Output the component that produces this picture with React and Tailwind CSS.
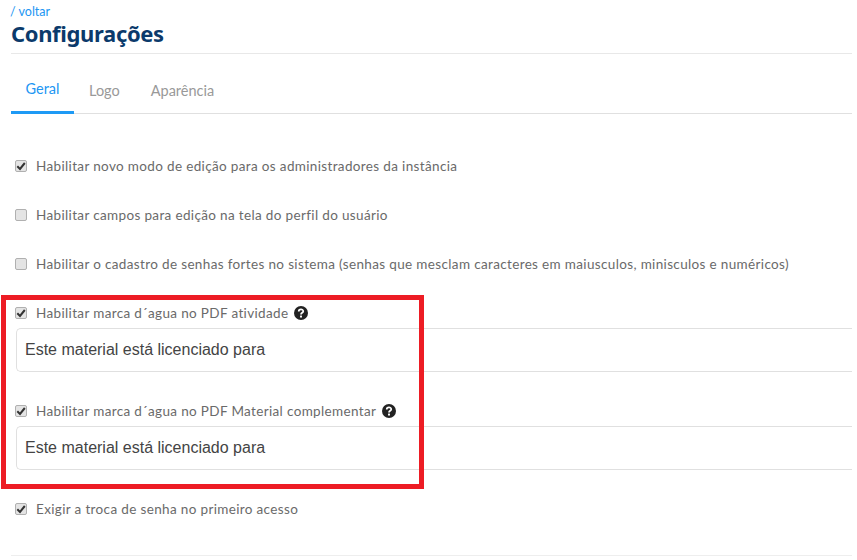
import React from "react";

const Check = ({ checked }) => (
  <span className="w-[12px] h-[12px] shrink-0 rounded-[2px] border border-[#b0b0b0] bg-[#e4e4e4] flex items-center justify-center">
    {checked && (
      <svg width="10" height="10" viewBox="0 0 10 10">
        <path d="M1.3 5.2 L4 7.9 L8.8 2" fill="none" stroke="#333" strokeWidth="2" />
      </svg>
    )}
  </span>
);

const Help = () => (
  <svg width="14" height="14" viewBox="0 0 13 13" className="ml-[6px] shrink-0">
    <circle cx="6.5" cy="6.5" r="6.5" fill="#222" />
    <path d="M4.4 5 C4.4 2.6 8.6 2.6 8.6 4.9 C8.6 6.3 6.5 6.3 6.5 7.8" fill="none" stroke="#fff" strokeWidth="1.6" />
    <rect x="5.6" y="8.9" width="1.8" height="1.8" fill="#fff" />
  </svg>
);

const Row = ({ checked, help, children, className = "" }) => (
  <div className={`flex items-center h-[18px] pl-[4px] text-[13.5px] tracking-[0.35px] text-[#6a6a6a] ${className}`}>
    <Check checked={checked} />
    <span className="ml-[9px] whitespace-nowrap">{children}</span>
    {help && <Help />}
  </div>
);

const Field = () => (
  <div className="ml-[5px] mt-[6px] h-[44px] flex items-center pl-[8px] pb-[1px] border border-[#e0e0e0] border-r-0 rounded-l-[5px] bg-white text-[16px] text-[#444] font-['Liberation_Sans',Arial,sans-serif]">
    Este material está licenciado para
  </div>
);

export default function App() {
  return (
    <div className="relative w-[857px] h-[560px] overflow-hidden bg-white font-['Lato','Noto_Sans',sans-serif]">
      <div className="w-[852px] pl-[11px]">
        <div className="pt-[4px] h-[19px] -ml-[1px] text-[12.5px] leading-[15px] text-[#2196f3]">/ voltar</div>
        <h1 className="h-[28px] text-[22px] leading-[28px] font-bold text-[#0b3a6b] font-['Noto_Sans',sans-serif] tracking-[-0.35px]">Configurações</h1>
        <div className="border-b border-[#e8e8e8] h-[7px]" />
        <div className="mt-[3px] flex h-[57px] border-b border-[#e0e0e0] text-[14.5px]">
          <div className="w-[63px] h-[57px] border-b-[3px] border-[#1e9af5] text-[#2196f3] text-center pt-[23px] leading-[18px]">Geral</div>
          <div className="ml-[15px] text-[#999] pt-[25px] leading-[18px]">Logo</div>
          <div className="ml-[31px] text-[#999] pt-[25px] leading-[18px]">Aparência</div>
        </div>
        <Row checked className="mt-[43px]">Habilitar novo modo de edição para os administradores da instância</Row>
        <Row className="mt-[31px]">Habilitar campos para edição na tela do perfil do usuário</Row>
        <Row className="mt-[31px]">Habilitar o cadastro de senhas fortes no sistema (senhas que mesclam caracteres em maiusculos, minisculos e numéricos)</Row>
        <Row checked help className="mt-[31px]">Habilitar marca d´agua no PDF atividade</Row>
        <Field />
        <Row checked help className="mt-[30px]">Habilitar marca d´agua no PDF Material complementar</Row>
        <Field />
        <Row checked className="mt-[30px]">Exigir a troca de senha no primeiro acesso</Row>
        <div className="mt-[37px] border-b border-[#eeeeee]" />
      </div>
      <div className="absolute left-[1px] top-[295px] w-[423px] h-[194px] border-[5px] border-[#ed1c24]" />
    </div>
  );
}
